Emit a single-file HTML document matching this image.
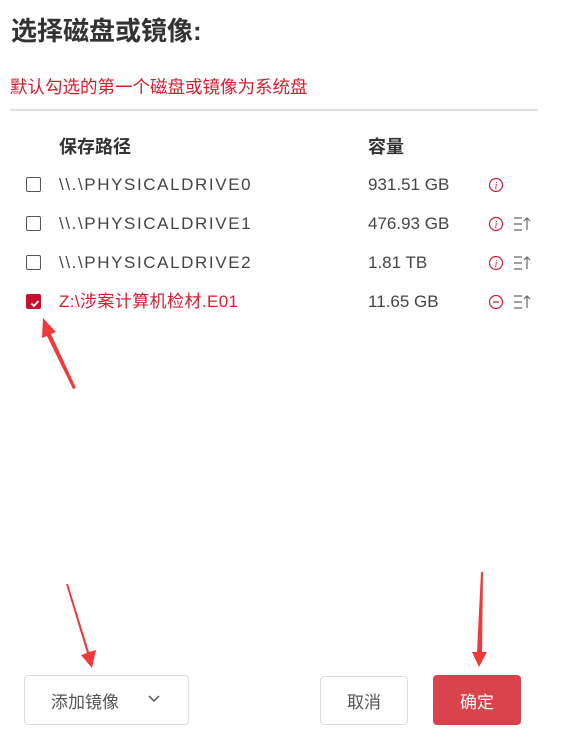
<!DOCTYPE html>
<html><head><meta charset="utf-8"><style>
body{margin:0;width:566px;height:755px;background:#fff;position:relative;font-family:"Liberation Sans","Noto Sans CJK SC",sans-serif;overflow:hidden}
.a{position:absolute;white-space:nowrap}
.cb{position:absolute;left:26px;width:13px;height:13px;border:1.5px solid #555;border-radius:2px}
.t{color:#444;font-size:17px;line-height:20px}
.p{letter-spacing:1.6px}
.btn{position:absolute;border:1px solid #dcdce0;border-radius:4px;box-sizing:border-box;font-size:17px;color:#555;display:flex;align-items:center;justify-content:center}
</style></head><body>
<div class="a" style="left:11px;top:13px;font-size:26px;line-height:36px;font-weight:bold;color:#333">选择磁盘或镜像:</div>
<div class="a" style="left:10px;top:75px;font-size:17.5px;line-height:24px;color:#e0182e">默认勾选的第一个磁盘或镜像为系统盘</div>
<div class="a" style="left:10px;top:109px;width:528px;height:2px;background:#dde0e6"></div>
<div class="a" style="left:59px;top:134px;font-size:18px;line-height:26px;font-weight:bold;color:#333">保存路径</div>
<div class="a" style="left:368px;top:134px;font-size:18px;line-height:26px;font-weight:bold;color:#333">容量</div>

<div class="cb" style="top:177px"></div>
<div class="a t p" style="left:59px;top:175px">\\.\PHYSICALDRIVE0</div>
<div class="a t" style="left:368px;top:175px">931.51 GB</div>

<div class="cb" style="top:216px"></div>
<div class="a t p" style="left:59px;top:214px">\\.\PHYSICALDRIVE1</div>
<div class="a t" style="left:368px;top:214px">476.93 GB</div>

<div class="cb" style="top:255px"></div>
<div class="a t p" style="left:59px;top:253px">\\.\PHYSICALDRIVE2</div>
<div class="a t" style="left:368px;top:253px">1.81 TB</div>

<div class="cb" style="top:294px;background:#c8102e;border-color:#c8102e"></div>
<svg class="a" style="left:28px;top:296px" width="14" height="14"><path d="M3.5 7.5 L6 10 L10.5 5" stroke="#fff" stroke-width="1.8" fill="none"/></svg>
<div class="a t" style="left:59px;top:292px;color:#e0182e;height:20px;letter-spacing:0.4px">Z:\涉案计算机检材.E01</div>
<div class="a t" style="left:368px;top:292px">11.65 GB</div>

<svg class="a" style="left:0;top:0" width="566" height="755">
<g fill="none" stroke="#d81e30" stroke-width="1.2">
<circle cx="496" cy="185" r="6.5"/><circle cx="496" cy="224" r="6.5"/><circle cx="496" cy="263" r="6.5"/><circle cx="496" cy="302" r="6.5"/>
<path d="M493 302h6"/>
</g>
<g fill="#d81e30" font-size="10" font-style="italic" font-family="Liberation Serif" text-anchor="middle">
<text x="496" y="189">i</text><text x="496" y="228">i</text><text x="496" y="267">i</text></g>
<g stroke="#666" stroke-width="1.2" fill="none">
<path d="M514 218h8M514 224h8M514 230h8M527 230v-12M524 221l3-3 3 3"/>
<path d="M514 257h8M514 263h8M514 269h8M527 269v-12M524 260l3-3 3 3"/>
<path d="M514 296h8M514 302h8M514 308h8M527 308v-12M524 299l3-3 3 3"/>
</g>
<g fill="#f03a3a">
<polygon points="43,318 56,332 51,334 76,388 73,389 47,336 42,338"/>
<polygon points="66,584 68,584 89,652 96,650 92,668 81,655 87,653"/>
<polygon points="481,572 483,572 482,652 487,652 479,667 472,652 477,652"/>
</g>
</svg>

<div class="btn" style="left:24px;top:675px;width:165px;height:50px;justify-content:flex-start;padding-left:26px">添加镜像</div>
<svg class="a" style="left:147px;top:694px" width="14" height="10"><path d="M2 2l5 5 5-5" stroke="#555" stroke-width="1.5" fill="none"/></svg>
<div class="btn" style="left:320px;top:676px;width:88px;height:49px">取消</div>
<div class="btn" style="left:433px;top:675px;width:88px;height:50px;background:#d9434b;border-color:#d9434b;color:#fff">确定</div>
</body></html>
